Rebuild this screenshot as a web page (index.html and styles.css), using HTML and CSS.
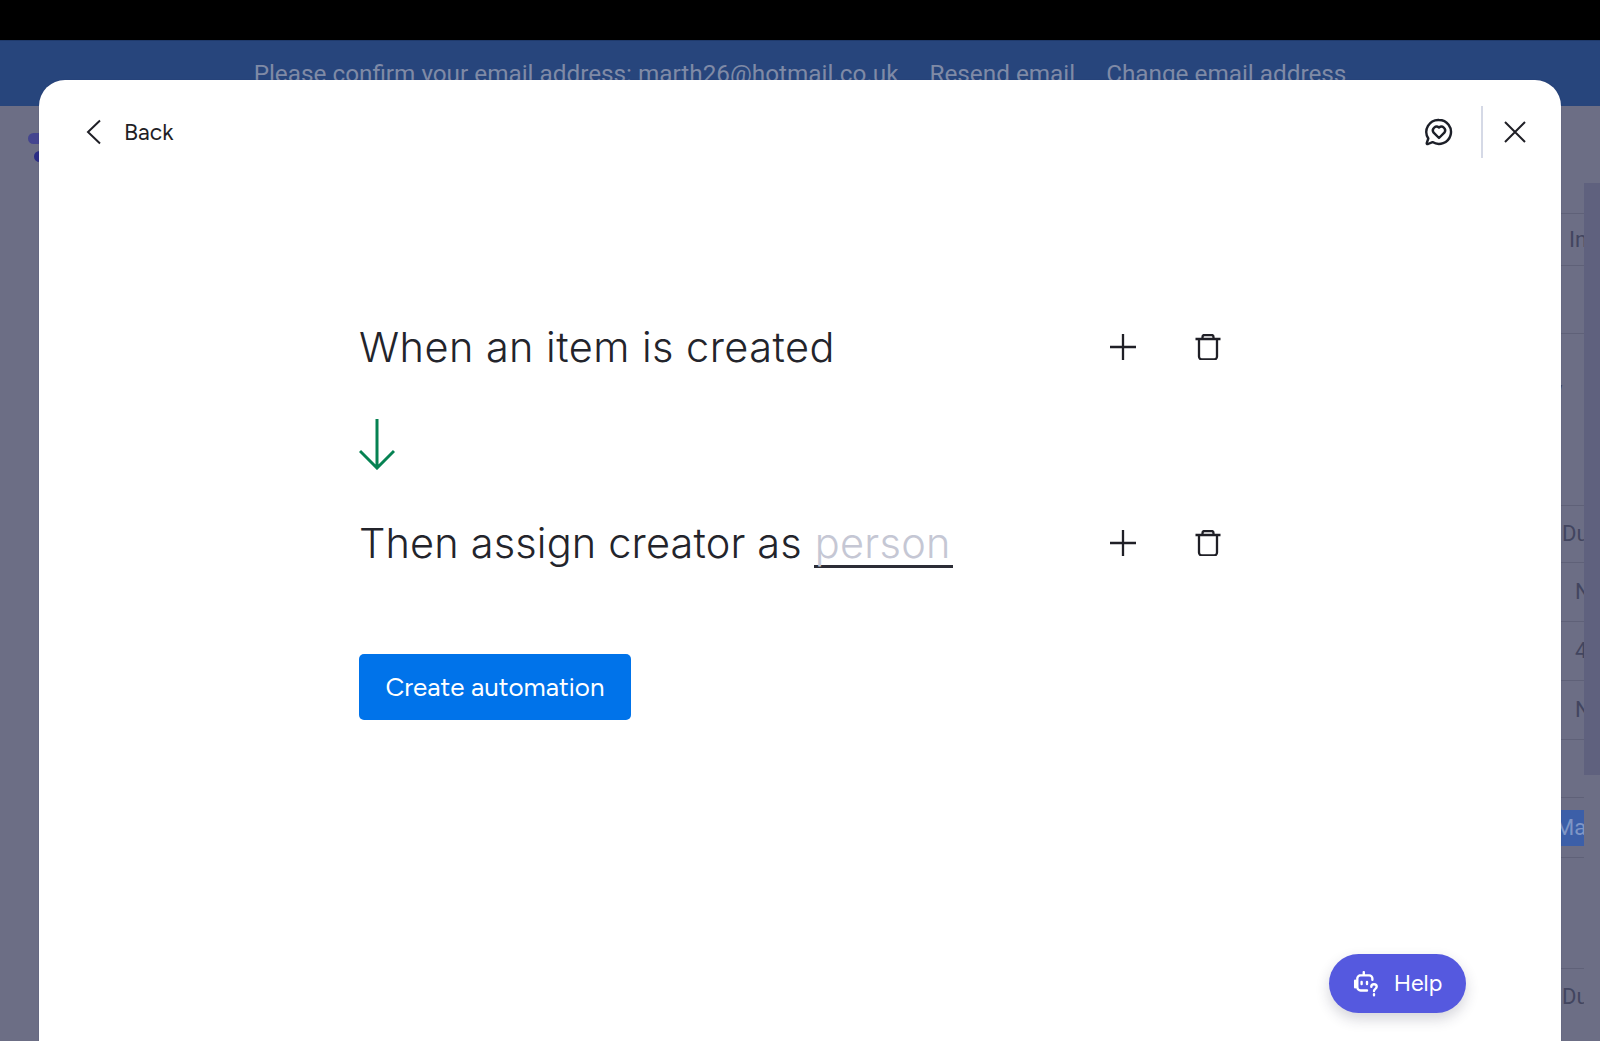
FILE: index.html
```html
<!DOCTYPE html>
<html lang="en">
<head>
<meta charset="utf-8">
<title>Create automation</title>
<link rel="stylesheet" href="styles.css">
</head>
<body>
<div class="topbar"></div>
<div class="banner">
  <span>Please confirm your email address: marth26@hotmail.co.uk</span>
  <span>Resend email</span>
  <span>Change email address</span>
</div>
<div class="board">
  <div class="logo"><i></i><i></i></div>
  <div class="table">
    <div class="cells">
      <div class="cell cell-a">In</div>
      <div class="cell cell-b"></div>
      <div class="cell cell-c"><em>y</em></div>
      <div class="cell cell-d">Du</div>
      <div class="cell cell-e">N</div>
      <div class="cell cell-e">4</div>
      <div class="cell cell-e">N</div>
      <div class="cell cell-f"></div>
      <div class="cell cell-g"><b>Ma</b></div>
      <div class="cell cell-h"></div>
      <div class="cell cell-i">Du</div>
    </div>
    <div class="scrollbar"></div>
  </div>
</div>

<main class="modal">
  <header class="modal-head">
    <button class="back">
      <svg class="ico-back" viewBox="0 0 16 26"><path d="M14 1.500 2 13l12 11.500"/></svg>
      <span>Back</span>
    </button>
    <div class="head-actions">
      <svg class="ico-feedback" viewBox="0 0 28 28">
        <path d="M14 2a12 12 0 1 1-6.500 22.100L3 26c-1 .3-1.500-.3-1.200-1.200l1.500-4.300A12 12 0 0 1 14 2Z"/>
        <path d="M14 20l-5.600-5.700a3.700 3.700 0 0 1 5.600-4.700 3.700 3.700 0 0 1 5.600 4.700Z"/>
      </svg>
      <div class="divider"></div>
      <svg class="ico-close" viewBox="0 0 22 22"><path d="M1 1l20 20M21 1 1 21"/></svg>
    </div>
  </header>

  <section class="recipe">
    <div class="line">
      <div class="sentence sentence-when">When an item is created</div>
      <div class="line-actions">
        <svg class="ico-plus" viewBox="0 0 26 26"><path d="M13 0v26M0 13h26"/></svg>
        <svg class="ico-trash" viewBox="0 0 26 26"><path d="M.5 5h25M4 5v17.500a3 3 0 0 0 3 3h12a3 3 0 0 0 3-3V5M7.500 5V3a2 2 0 0 1 2-2h7a2 2 0 0 1 2 2v2"/></svg>
      </div>
    </div>
    <svg class="ico-arrow" viewBox="0 0 36 51"><path d="M18 0v49M1 32l17 17 17-17"/></svg>
    <div class="line">
      <div class="sentence sentence-then">Then assign creator as <span class="blank">person</span></div>
      <div class="line-actions">
        <svg class="ico-plus" viewBox="0 0 26 26"><path d="M13 0v26M0 13h26"/></svg>
        <svg class="ico-trash" viewBox="0 0 26 26"><path d="M.5 5h25M4 5v17.500a3 3 0 0 0 3 3h12a3 3 0 0 0 3-3V5M7.500 5V3a2 2 0 0 1 2-2h7a2 2 0 0 1 2 2v2"/></svg>
      </div>
    </div>
    <button class="create">Create automation</button>
  </section>

  <button class="help">
    <svg class="ico-bot" viewBox="0 0 26 24">
      <path d="M10 1v3M2 9v6M6 4h9a3 3 0 0 1 3 3v1M13 18H7a3 3 0 0 1-3-3V7a3 3 0 0 1 3-3"/>
      <path d="M8 10v2M13 10v2"/>
      <path d="M17 14.500c0-3 5-3 5 0 0 2-2.500 2-2.500 4M19.500 21.500v1"/>
    </svg>
    <span>Help</span>
  </button>
</main>
</body>
</html>
```
FILE: styles.css
```css
* { box-sizing: border-box; }
html, body { height: 100%; }
body {
  margin: 0;
  height: 1041px;
  overflow: hidden;
  background: #6c6e85;
  font-family: "Inter", "Liberation Sans", sans-serif;
  display: flex;
  flex-direction: column;
}
.topbar { height: 40px; background: #000; flex: none; }
.banner {
  height: 66px;
  flex: none;
  background: #27457c;
  color: #7f8aa6;
  font: 400 24.300px/1 "Roboto", sans-serif;
  display: flex;
  justify-content: center;
  gap: 31px;
  padding: 21px 0 0 0;
  border-top: 1px solid #1f3a6c;
}
.board { flex: 1; display: flex; justify-content: space-between; min-height: 0; }
.logo { width: 39px; padding: 27px 0 0 28px; display: flex; flex-direction: column; gap: 7px; }
.logo i { display: block; width: 12px; height: 11px; border-radius: 6px 0 0 6px; background: #44458f; }
.logo i + i { margin-left: 6px; width: 6px; background: #2b2d85; }

.table { width: 39px; display: flex; color: #42455f; font: 400 22px/1 "Roboto", sans-serif; }
.cells { width: 23px; flex: none; overflow: hidden; padding-top: 107px; }
.cell { border-bottom: 1px solid #5f6178; white-space: nowrap; display: flex; align-items: center; }
.cell-a { height: 53px; border-top: 1px solid #5f6178; padding-left: 8px; }
.cell-b { height: 68px; }
.cell-c { height: 172px; align-items: flex-start; padding-top: 45px; }
.cell-c em { font-style: normal; margin-left: -9px; }
.cell-d { height: 57px; padding-left: 1px; }
.cell-e { height: 59px; padding-left: 14px; }
.cell-f { height: 58px; }
.cell-g { height: 60px; }
.cell-g b { display: block; width: 23px; height: 36px; overflow: hidden; background: #3c5fa8; color: #7f96c5; font-weight: 400; line-height: 36px; text-indent: -6px; }
.cell-h { height: 111px; }
.cell-i { height: 56px; border-bottom: 0; padding-left: 1px; }
.scrollbar { width: 16px; height: 592px; margin-top: 77px; background: #5f617e; }

.modal {
  position: absolute;
  left: 39px;
  top: 80px;
  width: 1522px;
  height: 961px;
  background: #fff;
  border-radius: 26px 26px 0 0;
  box-shadow: 0 0 1px rgba(30, 45, 100, .7);
}
.modal-head {
  height: 52px;
  margin-top: 26px;
  padding: 0 35px 0 47px;
  display: flex;
  align-items: center;
  justify-content: space-between;
}
.back {
  display: flex;
  align-items: center;
  gap: 22px;
  border: 0;
  padding: 0;
  background: none;
  color: #1f1f26;
  font: 400 23px/1 "Figtree", "Lato", sans-serif;
}
.ico-back { width: 16px; height: 26px; fill: none; stroke: #1f1f26; stroke-width: 2; }
.head-actions { display: flex; align-items: center; }
.ico-feedback { width: 28px; height: 28px; fill: none; stroke: #1c1f28; stroke-width: 2.400; stroke-linejoin: round; }
.divider { width: 2px; height: 52px; background: #d5d9e6; margin: 0 21px 0 28px; }
.ico-close { width: 22px; height: 22px; fill: none; stroke: #1f1f26; stroke-width: 2; }

.recipe { padding: 161px 0 0 320px; width: 1182px; display: flex; flex-direction: column; align-items: flex-start; }
.line { width: 100%; height: 56px; display: flex; align-items: center; justify-content: space-between; }
.sentence { font: 300 41.500px/56px "Inter", "Open Sans", sans-serif; color: #23242b; white-space: nowrap; }
.sentence-when { letter-spacing: .44px; }
.sentence-then { letter-spacing: .15px; }
.blank { display: inline-block; color: #c5c7d4; line-height: 44px; letter-spacing: .3px; border-bottom: 3px solid #2c2d36; padding: 0 2px 0 1px; }
.line-actions { display: flex; align-items: center; gap: 59px; }
.ico-plus { width: 26px; height: 26px; fill: none; stroke: #1f1f26; stroke-width: 2.300; }
.ico-trash { width: 26px; height: 26px; fill: none; stroke: #1f1f26; stroke-width: 2.300; }
.ico-arrow { width: 36px; height: 51px; margin: 44px 0 45px 0; fill: none; stroke: #068252; stroke-width: 3; }
.create {
  margin-top: 83px;
  width: 272px;
  height: 66px;
  border: 0;
  border-radius: 5px;
  background: #0073ea;
  color: #fff;
  font: 400 26px/1 "Figtree", "Lato", sans-serif;
}
.help {
  position: absolute;
  right: 95px;
  top: 874px;
  width: 137px;
  height: 59px;
  border: 0;
  border-radius: 30px;
  background: #5559df;
  color: #fff;
  font: 400 23px/1 "Figtree", "Lato", sans-serif;
  display: flex;
  align-items: center;
  justify-content: center;
  gap: 13px;
  box-shadow: 0 6px 14px rgba(40, 40, 70, .2);
}
.ico-bot { width: 28px; height: 26px; fill: none; stroke: #fff; stroke-width: 2.200; stroke-linecap: round; stroke-linejoin: round; }
```
